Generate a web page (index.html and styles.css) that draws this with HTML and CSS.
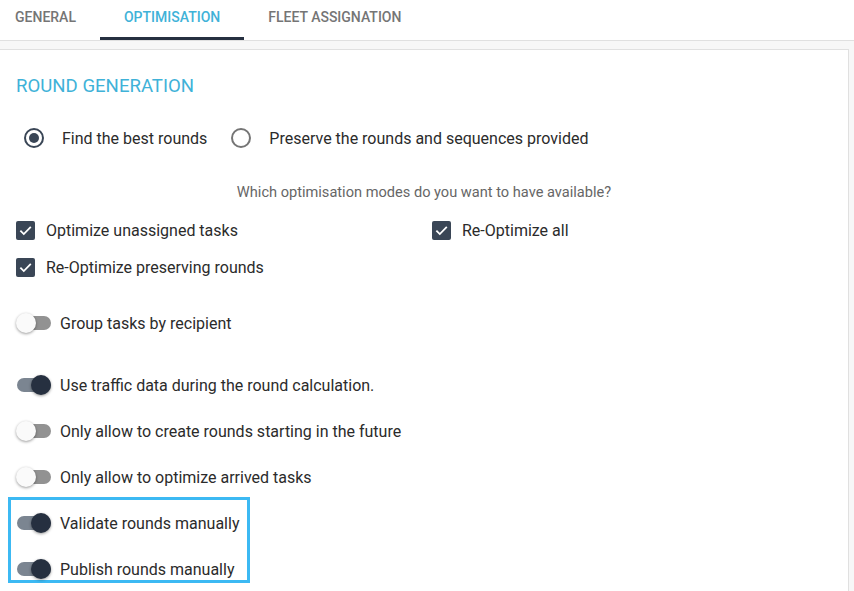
FILE: index.html
```html
<!DOCTYPE html>
<html lang="en">
<head>
    <meta charset="UTF-8">
    <meta name="viewport" content="width=device-width, initial-scale=1.0">
    <title>Settings - Optimisation</title>
    <link rel="stylesheet" href="styles.css">
</head>
<body>
    <nav class="tabs">
        <div class="tab">General</div>
        <div class="tab active">Optimisation</div>
        <div class="tab">Fleet assignation</div>
    </nav>

    <div class="page">
        <div class="card">
            <h2 class="section-title">Round generation</h2>

            <div class="radio-group">
                <label class="radio checked"><span class="radio-dot"></span>Find the best rounds</label>
                <label class="radio"><span class="radio-dot"></span>Preserve the rounds and sequences provided</label>
            </div>

            <p class="question">Which optimisation modes do you want to have available?</p>

            <div class="checkbox-grid">
                <label class="checkbox"><span class="box"><svg viewBox="0 0 20 20"><path d="M4.6 10.1l3.6 3.6L15.6 6.3" fill="none" stroke="#fff" stroke-width="1.9"/></svg></span>Optimize unassigned tasks</label>
                <label class="checkbox"><span class="box"><svg viewBox="0 0 20 20"><path d="M4.6 10.1l3.6 3.6L15.6 6.3" fill="none" stroke="#fff" stroke-width="1.9"/></svg></span>Re-Optimize all</label>
                <label class="checkbox"><span class="box"><svg viewBox="0 0 20 20"><path d="M4.6 10.1l3.6 3.6L15.6 6.3" fill="none" stroke="#fff" stroke-width="1.9"/></svg></span>Re-Optimize preserving rounds</label>
            </div>

            <div class="toggle-list">
                <label class="toggle group-first"><span class="switch"><span class="thumb"></span></span>Group tasks by recipient</label>
                <label class="toggle on traffic"><span class="switch"><span class="thumb"></span></span>Use traffic data during the round calculation.</label>
                <label class="toggle"><span class="switch"><span class="thumb"></span></span>Only allow to create rounds starting in the future</label>
                <label class="toggle"><span class="switch"><span class="thumb"></span></span>Only allow to optimize arrived tasks</label>

                <div class="highlight">
                    <label class="toggle on"><span class="switch"><span class="thumb"></span></span>Validate rounds manually</label>
                    <label class="toggle on"><span class="switch"><span class="thumb"></span></span>Publish rounds manually</label>
                </div>
            </div>
        </div>
    </div>
</body>
</html>
```

FILE: styles.css
```css
* {
    margin: 0;
    padding: 0;
    box-sizing: border-box;
}
body {
    font-family: Roboto, "Liberation Sans", Arial, sans-serif;
    background-color: #fff;
    color: #2b2b2b;
    overflow: hidden;
}

/* tabs */
.tabs {
    display: flex;
    height: 41px;
    border-bottom: 1px solid #e0e0e0;
}
.tab {
    padding: 0 24px;
    height: 40px;
    line-height: 34px;
    font-size: 14px;
    font-weight: 500;
    text-transform: uppercase;
    color: #757575;
    border-bottom: 3px solid transparent;
}
.tab:first-child {
    padding-left: 15px;
}
.tab.active {
    color: #3fb2d8;
    border-bottom-color: #263040;
}

/* page */
.page {
    background-color: #f7f7f7;
    padding: 8px 5px 0 0;
    height: 560px;
}
.card {
    background-color: #fff;
    border: 1px solid #e0e0e0;
    border-left: none;
    height: 100%;
    padding: 24px 16px 0 16px;
}
.section-title {
    font-size: 18.6px;
    font-weight: 400;
    line-height: 24px;
    text-transform: uppercase;
    color: #3fb2d8;
}

/* radios */
.radio-group {
    display: flex;
    gap: 24px;
    margin-top: 30px;
    padding-left: 8px;
}
.radio {
    display: flex;
    align-items: center;
    gap: 18px;
    height: 20px;
    font-size: 16px;
}
.radio-dot {
    width: 20px;
    height: 20px;
    border-radius: 50%;
    border: 2px solid #757575;
    display: flex;
    align-items: center;
    justify-content: center;
}
.radio.checked .radio-dot {
    border-color: #3a4656;
}
.radio.checked .radio-dot::after {
    content: "";
    width: 10px;
    height: 10px;
    border-radius: 50%;
    background-color: #3a4656;
}

.question {
    margin-top: 34px;
    font-size: 14.6px;
    line-height: 20px;
    text-align: center;
    color: #666;
}

/* checkboxes */
.checkbox-grid {
    display: grid;
    grid-template-columns: 416px 1fr;
    row-gap: 17px;
    margin-top: 18px;
}
.checkbox {
    display: flex;
    align-items: center;
    gap: 11px;
    height: 20px;
    font-size: 16px;
}
.box {
    width: 19px;
    height: 19px;
    border-radius: 2px;
    background-color: #3a4656;
    display: flex;
    align-items: center;
    justify-content: center;
}
.box svg {
    width: 19px;
    height: 19px;
}

/* switches */
.toggle-list {
    margin-top: 36px;
}
.toggle {
    display: flex;
    align-items: center;
    gap: 9px;
    height: 20px;
    margin-top: 26px;
    font-size: 16px;
}
.toggle.group-first {
    margin-top: 0;
}
.toggle.traffic {
    margin-top: 42px;
}
.switch {
    position: relative;
    width: 35px;
    height: 20px;
    display: flex;
    align-items: center;
}
.switch::before {
    content: "";
    margin-left: 1px;
    width: 34px;
    height: 14px;
    border-radius: 7px;
    background-color: #929292;
}
.thumb {
    position: absolute;
    left: 0;
    top: 0;
    width: 20px;
    height: 20px;
    border-radius: 50%;
    background-color: #fafafa;
    box-shadow: 0 1px 3px rgba(0, 0, 0, 0.4);
}
.toggle.on .switch::before {
    background-color: #7b8591;
}
.toggle.on .thumb {
    left: 15px;
    background-color: #263040;
}

/* highlighted block */
.highlight {
    width: 242px;
    margin: 10px 0 0 -8px;
    padding: 13px 0 1px 5px;
    border: 3px solid #3cb9f3;
}
.highlight .toggle:first-child {
    margin-top: 0;
}
```
